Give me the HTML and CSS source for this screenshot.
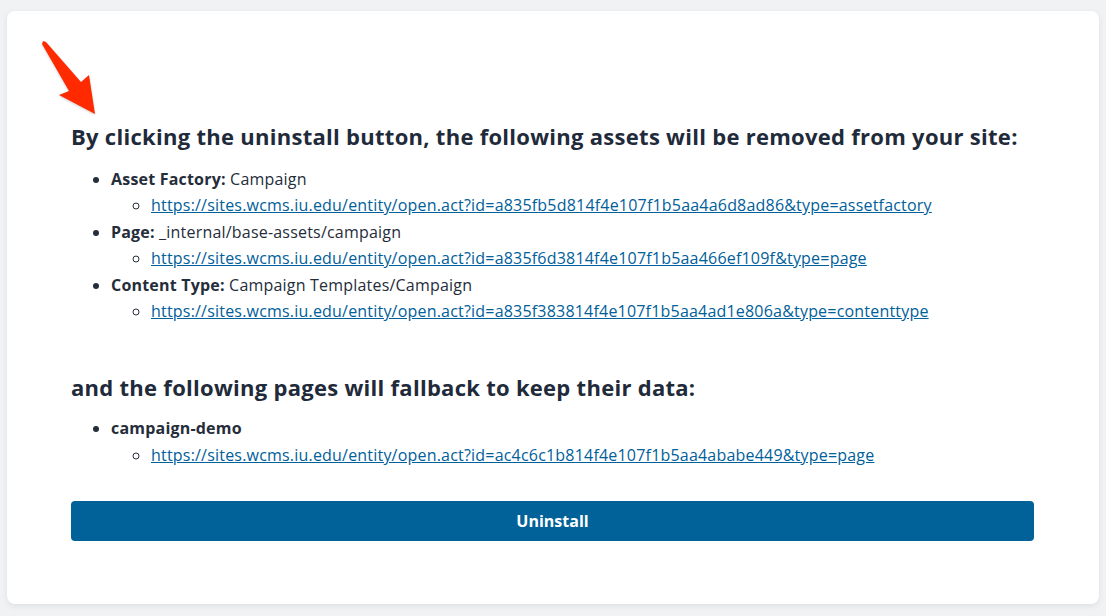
FILE: index.html
```html
<!DOCTYPE html>
<html lang="en">
<head>
<meta charset="utf-8">
<title>Uninstall</title>
<link rel="stylesheet" href="styles.css">
</head>
<body>
<main class="card">
  <svg class="arrow" width="70" height="90" viewBox="0 0 70 90" aria-hidden="true">
    <polygon points="7,9 10,10 45,50 53,43 59,82 23,63 33,59 6,12" fill="#ff2a00"/>
  </svg>
  <h2 class="title">By clicking the uninstall button, the following assets will be removed from your site:</h2>
  <ul class="list">
    <li><strong>Asset Factory:</strong> Campaign
      <ul class="sub"><li><a href="#">https://sites.wcms.iu.edu/entity/open.act?id=a835fb5d814f4e107f1b5aa4a6d8ad86&amp;type=assetfactory</a></li></ul>
    </li>
    <li><strong>Page:</strong> _internal/base-assets/campaign
      <ul class="sub"><li><a href="#">https://sites.wcms.iu.edu/entity/open.act?id=a835f6d3814f4e107f1b5aa466ef109f&amp;type=page</a></li></ul>
    </li>
    <li><strong>Content Type:</strong> Campaign Templates/Campaign
      <ul class="sub"><li><a href="#">https://sites.wcms.iu.edu/entity/open.act?id=a835f383814f4e107f1b5aa4ad1e806a&amp;type=contenttype</a></li></ul>
    </li>
  </ul>
  <h2 class="title second">and the following pages will fallback to keep their data:</h2>
  <ul class="list">
    <li><strong>campaign-demo</strong>
      <ul class="sub"><li><a href="#">https://sites.wcms.iu.edu/entity/open.act?id=ac4c6c1b814f4e107f1b5aa4ababe449&amp;type=page</a></li></ul>
    </li>
  </ul>
  <button class="btn" type="button">Uninstall</button>
</main>
</body>
</html>
```
FILE: styles.css
```css
html, body {
  margin: 0;
  padding: 0;
}
body {
  background: #f1f2f4;
  font-family: "Open Sans", "Liberation Sans", sans-serif;
  color: #252d3a;
  padding: 11px 7px 12px 7px;
}
.card {
  position: relative;
  background: #fff;
  border-radius: 8px;
  box-shadow: 0 2px 6px rgba(0, 0, 0, 0.08);
  padding: 64px 65px 64px 64px;
  height: 465px;
}
.arrow {
  position: absolute;
  left: 29px;
  top: 21px;
  filter: drop-shadow(0 1px 1px rgba(0,0,0,0.2));
}
.title {
  font-size: 22px;
  line-height: 26px;
  font-weight: 700;
  letter-spacing: 0.28px;
  margin: 48px 0 17px 0;
  color: #1f2a3a;
}
.title.second {
  margin-top: 50px;
  margin-bottom: 15px;
}
.list {
  margin: 0;
  padding-left: 40px;
  font-size: 16px;
  line-height: 26.4px;
  letter-spacing: 0.2px;
  list-style: disc;
}
.sub {
  margin: 0;
  padding-left: 40px;
  list-style: circle;
}
.list a {
  color: #00609a;
  text-decoration: underline;
}
.btn {
  display: block;
  width: 100%;
  height: 40px;
  margin-top: 33px;
  background: #006298;
  color: #fff;
  border: 0;
  border-radius: 4px;
  font-family: inherit;
  font-size: 16px;
  font-weight: 700;
}
```
